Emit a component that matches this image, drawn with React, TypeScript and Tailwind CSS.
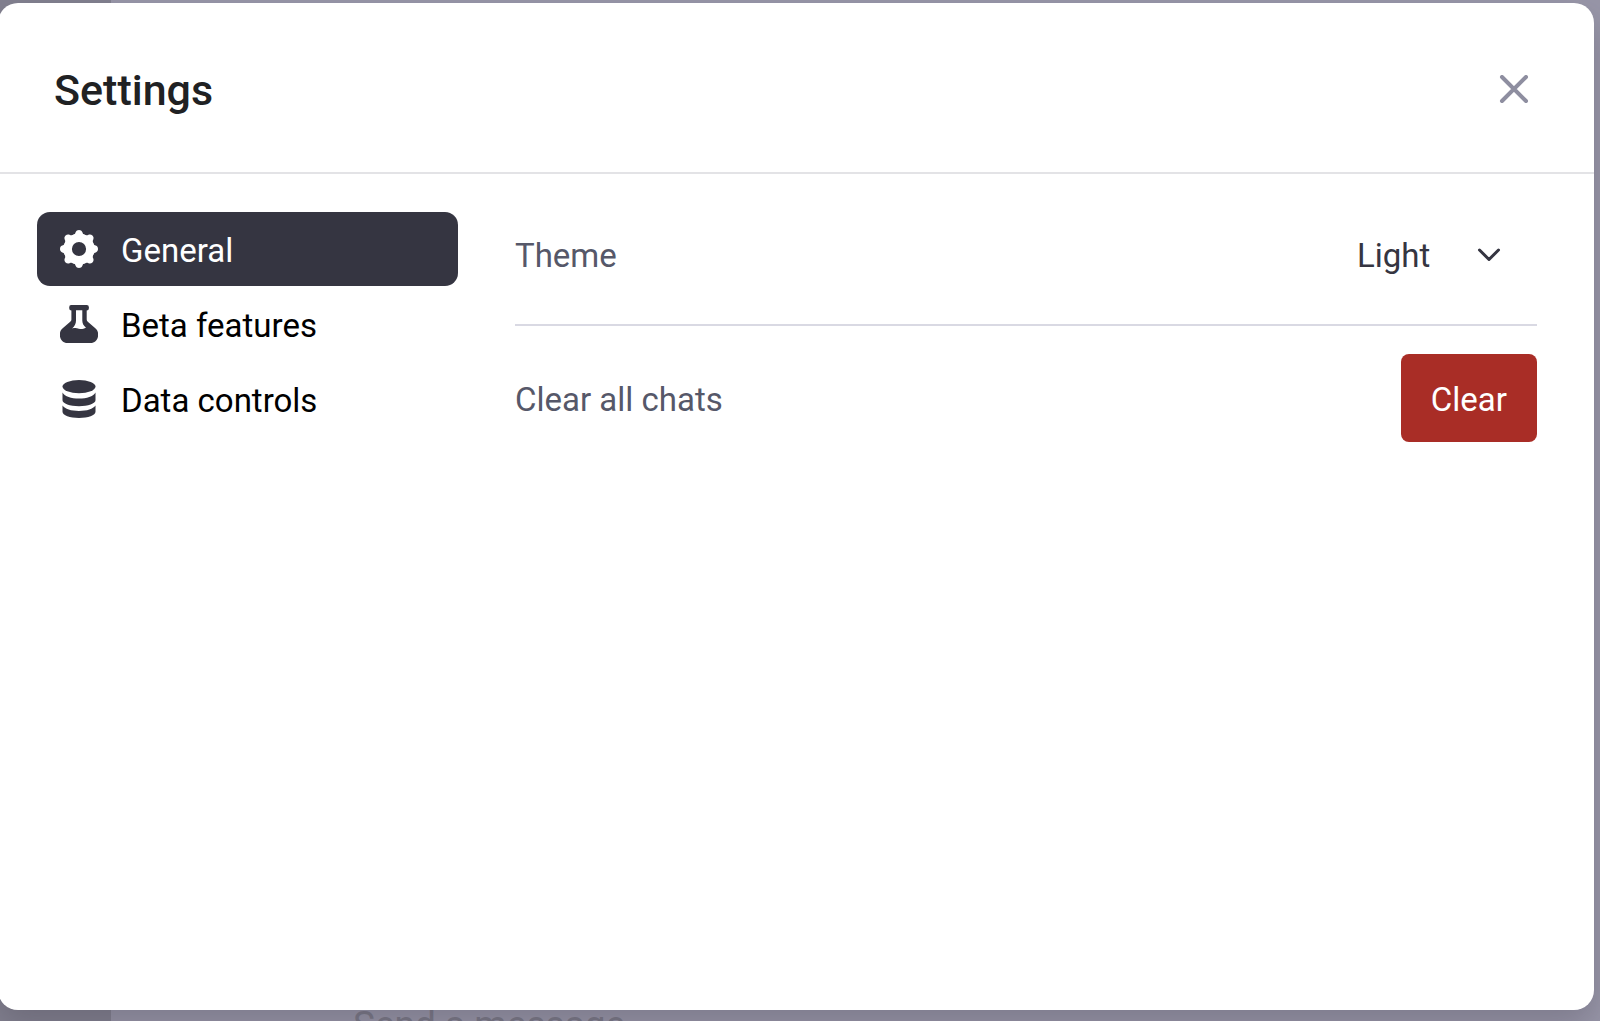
import { useState } from "react";

type Tab = "general" | "beta" | "data";

const iconClass = "size-[38px] shrink-0";

// one tooth of the gear, repeated every 45 degrees
const teeth = [0, 45, 90, 135, 180, 225, 270, 315];

function GearIcon() {
  return (
    <svg viewBox="0 0 38 38" fill="currentColor" className={iconClass} aria-hidden="true">
      <circle cx="19" cy="19" r="11.300" fill="none" stroke="currentColor" strokeWidth="8.400" />
      {teeth.map((angle) => (
        <path
          key={angle}
          transform={`rotate(${angle} 19 19)`}
          d="M12.600 5.200C15.200 4.300 15 3.500 15.600 2.200C16.300 .7 17.400 0 19 0s2.700.7 3.400 2.200c.6 1.300.4 2.100 3 3L24 9H14Z"
        />
      ))}
    </svg>
  );
}

function FlaskIcon() {
  return (
    <svg viewBox="0 0 38 38" fill="currentColor" className={iconClass} aria-hidden="true">
      <path
        fillRule="evenodd"
        d="M11.500 0h15.200a2.200 2.200 0 0 1 2.200 2.200v1a2.200 2.200 0 0 1-2.200 2.200V14.600c0 .9.400 1.600 1.100 2.200l7.500 6.400C38 25.400 38.500 28.500 38 31.500C37.200 35.600 34.600 38 30.500 38h-23C3.400 38 .8 35.600 0 31.500c-.5-3 0-6.100 2.700-8.300l7.500-6.400c.7-.6 1.200-1.300 1.200-2.200V5.400a2.200 2.200 0 0 1-2.200-2.200v-1A2.200 2.200 0 0 1 11.500 0Zm4.500 5.200V15.500c0 3.200-1.300 5.700-3.900 8c2.700-.7 4.400-.6 6.700.2c2.500.8 4.300.4 7.200-1c-2.500-2.300-3.700-4.300-3.700-7.300V5.200Z"
      />
    </svg>
  );
}

function DatabaseIcon() {
  return (
    <svg viewBox="0 0 38 38" fill="currentColor" className={iconClass} aria-hidden="true">
      <ellipse cx="19" cy="6.600" rx="16.500" ry="6.600" />
      <path d="M2.500 12.400C5 16.500 11 18.400 19 18.400S33 16.500 35.500 12.400V20.300c0 3.300-7.400 5.900-16.500 5.900S2.500 23.600 2.500 20.300Z" />
      <path d="M2.500 25.600C5 29.200 11 31 19 31S33 29.200 35.500 25.600V31.800c0 3.500-7.400 6.200-16.500 6.200S2.500 35.300 2.500 31.800Z" />
    </svg>
  );
}

const tabs = [
  { id: "general" as Tab, label: "General", Icon: GearIcon },
  { id: "beta" as Tab, label: "Beta features", Icon: FlaskIcon },
  { id: "data" as Tab, label: "Data controls", Icon: DatabaseIcon },
];

export default function App() {
  const [active, setActive] = useState<Tab>("general");
  const [theme, setTheme] = useState("Light");

  return (
    <div className="relative flex h-screen overflow-hidden bg-[#9896a8] pt-[3px] pr-1.5 pb-[11px] font-[Roboto,sans-serif]">
      {/* Dimmed page behind the dialog */}
      <div className="absolute inset-0 flex">
        <div className="w-[111px] bg-[#82808f]" />
        <div className="relative flex-1">
          <p className="absolute -bottom-7 left-[242px] text-[37px] leading-[48px] text-[#7b7987]">Send a message</p>
        </div>
      </div>

      <div
        role="dialog"
        aria-labelledby="settings-title"
        className="relative -ml-0.5 flex flex-1 flex-col rounded-[20px] bg-white shadow-[0_16px_32px_rgba(50,48,65,0.25)]"
      >
        <header className="flex items-center justify-between border-b-2 border-[#e3e3e6] pt-[59px] pr-16 pb-[53px] pl-14">
          <h2 id="settings-title" className="text-[43px] leading-[57px] font-medium text-[#202123]">Settings</h2>
          <button type="button" aria-label="Close" className="text-[#8e8ea0]">
            <svg viewBox="0 0 32 32" fill="none" stroke="currentColor" strokeWidth="4" strokeLinecap="round" className="size-8">
              <path d="M4 2l24 24M28 2L4 26" />
            </svg>
          </button>
        </header>

        <div className="flex gap-[57px] pt-[38px] pr-[57px] pl-[39px]">
          {/* Tabs */}
          <nav className="flex w-[421px] shrink-0 flex-col gap-px" aria-label="Settings sections">
            {tabs.map(({ id, label, Icon }) => (
              <button
                key={id}
                type="button"
                onClick={() => setActive(id)}
                className={`flex h-[74px] items-center gap-[23px] rounded-[13px] px-[23px] text-left text-[33px] leading-10 ${active === id ? "bg-[#353541] text-white" : "text-black"}`}
              >
                <span className={active === id ? "text-white" : "text-[#353541]"}>
                  <Icon />
                </span>
                <span className="pt-1">{label}</span>
              </button>
            ))}
          </nav>

          {/* General */}
          <div className="flex-1 text-[33px] leading-10 text-[#565869]">
            <div className="flex items-center justify-between border-b-2 border-[#d9d9e3] pt-6 pb-12">
              <label htmlFor="theme">Theme</label>
              <div className="relative flex items-center text-[#353541]">
                <select
                  id="theme"
                  value={theme}
                  onChange={(e) => setTheme(e.target.value)}
                  className="w-[180px] appearance-none bg-transparent"
                >
                  <option>Light</option>
                  <option>Dark</option>
                  <option>System</option>
                </select>
                <svg viewBox="0 0 24 24" fill="none" stroke="currentColor" strokeWidth="3" strokeLinecap="round" strokeLinejoin="round" className="pointer-events-none absolute right-9 size-6">
                  <path d="M2.500 6L12 15.500L21.500 6" />
                </svg>
              </div>
            </div>
            <div className="flex items-baseline justify-between pt-7">
              <span>Clear all chats</span>
              <button type="button" className="rounded-lg bg-[#a92d26] px-[30px] pt-[26px] pb-[22px] text-white">Clear</button>
            </div>
          </div>
        </div>
      </div>
    </div>
  );
}
